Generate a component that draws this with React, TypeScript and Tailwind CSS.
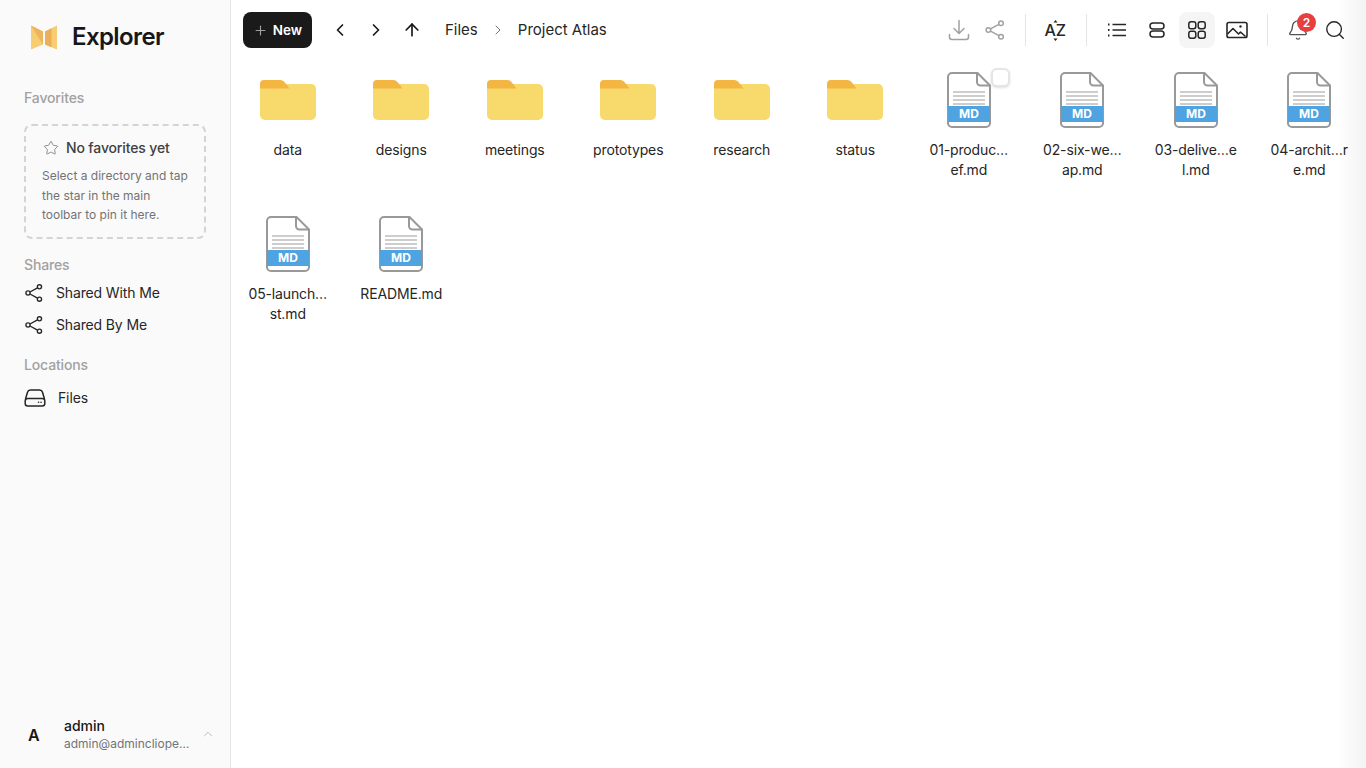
import React from 'react';
import { ArrowUp, Bell, ChevronLeft, ChevronRight, ChevronUp, Plus, Search, Star } from 'lucide-react';

type Entry = { kind: 'folder' | 'md'; lines: string[]; checkbox?: boolean };

const entries: Entry[] = [
  { kind: 'folder', lines: ['data'] },
  { kind: 'folder', lines: ['designs'] },
  { kind: 'folder', lines: ['meetings'] },
  { kind: 'folder', lines: ['prototypes'] },
  { kind: 'folder', lines: ['research'] },
  { kind: 'folder', lines: ['status'] },
  { kind: 'md', lines: ['01-produc…', 'ef.md'], checkbox: true },
  { kind: 'md', lines: ['02-six-we…', 'ap.md'] },
  { kind: 'md', lines: ['03-delive…e', 'l.md'] },
  { kind: 'md', lines: ['04-archit…r', 'e.md'] },
  { kind: 'md', lines: ['05-launch…', 'st.md'] },
  { kind: 'md', lines: ['README.md'] },
];

function ShareIcon({ className }: { className?: string }) {
  return (
    <svg viewBox="0 0 22 22" fill="none" stroke="currentColor" strokeWidth="1.5" className={className}>
      <circle cx="17" cy="4.2" r="2.3" />
      <circle cx="4.4" cy="11" r="2.3" />
      <circle cx="17" cy="17.8" r="2.3" />
      <path d="M6.5 9.900 14.900 5.300M6.500 12.100l8.400 4.600" />
    </svg>
  );
}

function DownloadIcon() {
  return (
    <svg viewBox="0 0 22 22" width="22" height="22" fill="none" stroke="currentColor" strokeWidth="1.5" strokeLinecap="round" strokeLinejoin="round" className="text-neutral-400">
      <path d="M11 1.500V14M6 9.500l5 5 5-5" />
      <path d="M1.500 15.500v2.500a2.500 2.500 0 0 0 2.500 2.500h14a2.500 2.500 0 0 0 2.500-2.500v-2.500" />
    </svg>
  );
}

function DriveIcon() {
  return (
    <svg viewBox="0 0 22 20" width="22" height="20" fill="none" stroke="currentColor" strokeWidth="1.5" className="text-neutral-800">
      <path d="M1.500 11 3.500 4.200A3 3 0 0 1 6.300 2h9.400a3 3 0 0 1 2.800 2.200L20.500 11" />
      <rect x="1.200" y="10.500" width="19.600" height="7.500" rx="2.500" />
      <path d="M14.500 14.300h.1M17 14.300h.1" strokeLinecap="round" />
    </svg>
  );
}

function Logo() {
  return (
    <svg viewBox="0 0 28 25" width="28" height="25" className="shrink-0">
      <path d="M1 .5 13 6.500V19.500L1 24.500Z" fill="#f6cd72" />
      <path d="M1 .5 13 6.500V19.500Z" fill="#eeb45c" />
      <path d="M27 .5 15 6.500V19.500L27 24.500Z" fill="#f6cd72" />
      <path d="M21.500 3.200 15 6.500V19.500L21.500 22.200Z" fill="#ebaf5a" />
    </svg>
  );
}

function SortIcon() {
  return (
    <svg viewBox="0 0 24 24" width="24" height="24" className="text-neutral-800">
      <text x="0.500" y="18" fontSize="16" fontWeight="500" fontFamily="Inter, sans-serif" fill="currentColor">A</text>
      <text x="11.800" y="18" fontSize="16" fontWeight="500" fontFamily="Inter, sans-serif" fill="currentColor">Z</text>
      <path d="M11.500 2 13.500 4.500H9.500ZM11.500 23 13.500 20.500H9.500Z" fill="currentColor" />
    </svg>
  );
}

function ListIcon() {
  return (
    <svg viewBox="0 0 20 20" width="20" height="20" fill="none" stroke="currentColor" strokeWidth="1.600" className="text-neutral-800">
      <path d="M5.500 4.500H19M5.500 10H19M5.500 15.500H19" />
      <path d="M1 4.500h1.500M1 10h1.500M1 15.500h1.500" strokeWidth="2" />
    </svg>
  );
}

function RowsIcon() {
  return (
    <svg viewBox="0 0 20 20" width="20" height="20" fill="none" stroke="currentColor" strokeWidth="1.5" className="text-neutral-800">
      <rect x="3" y="3" width="14" height="6" rx="3" />
      <rect x="3" y="11" width="14" height="6" rx="3" />
    </svg>
  );
}

function GridIcon() {
  return (
    <svg viewBox="0 0 20 20" width="20" height="20" fill="none" stroke="currentColor" strokeWidth="1.5" className="text-neutral-800">
      <rect x="1.800" y="1.800" width="7" height="7" rx="2.200" />
      <rect x="11.200" y="1.800" width="7" height="7" rx="2.200" />
      <rect x="1.800" y="11.200" width="7" height="7" rx="2.200" />
      <rect x="11.200" y="11.200" width="7" height="7" rx="2.200" />
    </svg>
  );
}

function ImageIcon() {
  return (
    <svg viewBox="0 0 22 18" width="22" height="18" fill="none" stroke="currentColor" strokeWidth="1.600" strokeLinejoin="round" className="text-neutral-800">
      <rect x="1" y="1.500" width="20" height="15" rx="1.800" />
      <path d="M1.500 13 7 7.500l5.500 5.500 2-2 5 4.500" />
      <circle cx="14.500" cy="5.500" r="1.200" fill="currentColor" stroke="none" />
    </svg>
  );
}

function FolderIcon() {
  return (
    <svg viewBox="0 0 56 40" width="56" height="40">
      <rect x="0" y="4" width="56" height="36" rx="5" fill="#f8d96b" />
      <path d="M0 9V4a4 4 0 0 1 4-4h16.500a5 5 0 0 1 3.500 1.500L26 4c1 1 2 2 3.500 4.500H0Z" fill="#f4b642" />
    </svg>
  );
}

function MdIcon() {
  return (
    <svg viewBox="0 0 44 56" width="44" height="56">
      <path d="M5 1h25.500L43 13.500V51a4 4 0 0 1-4 4H5a4 4 0 0 1-4-4V5a4 4 0 0 1 4-4Z" fill="#fff" stroke="#999" strokeWidth="2" />
      <path d="M30 1v9a3.500 3.500 0 0 0 3.500 3.500H43" fill="none" stroke="#999" strokeWidth="2" />
      <path d="M6 20h32M6 24h32M6 28h32M6 32h32" stroke="#bdbdbd" strokeWidth="1.300" />
      <rect x="1" y="34" width="42" height="16" fill="#4ea3e0" />
      <text x="22" y="46" textAnchor="middle" fontSize="12" fontWeight="700" fontFamily="Inter, sans-serif" fill="#fff">MD</text>
    </svg>
  );
}

function Divider() {
  return <div className="mx-3 h-8 w-px bg-neutral-200" />;
}

function ToolButton({ children, active }: { children: React.ReactNode; active?: boolean }) {
  return (
    <button className={`flex h-9 w-9 items-center justify-center rounded-lg ${active ? 'bg-neutral-100' : ''}`}>
      {children}
    </button>
  );
}

function Sidebar() {
  return (
    <aside className="flex h-screen w-[231px] shrink-0 flex-col border-r border-neutral-200 bg-[#fafafa] px-6">
      <div className="flex h-[74px] items-center gap-[14px] pl-[6px]">
        <Logo />
        <span className="text-2xl font-semibold tracking-tight text-neutral-900">Explorer</span>
      </div>

      <h3 className="mt-[14px] text-sm leading-5 font-medium tracking-[-0.01em] text-neutral-400">Favorites</h3>
      <div className="mt-4 h-[115px] w-[182px] rounded-lg border-2 border-dashed border-neutral-300 pt-3 pl-4">
        <div className="flex items-center gap-[7px]">
          <Star size={16} strokeWidth={1.2} className="ml-[1px] text-neutral-500" />
          <span className="text-sm leading-5 font-medium tracking-[-0.01em] text-neutral-700">No favorites yet</span>
        </div>
        <p className="mt-2 text-xs leading-[19.5px] text-neutral-500">
          Select a directory and tap
          <br />
          the star in the main
          <br />
          toolbar to pin it here.
        </p>
      </div>

      <h3 className="mt-4 text-sm leading-5 font-medium tracking-[-0.01em] text-neutral-400">Shares</h3>
      <div className="mt-[2px] flex flex-col">
        {['Shared With Me', 'Shared By Me'].map((label) => (
          <div key={label} className="flex h-8 items-center gap-[12px] text-neutral-800">
            <ShareIcon className="h-5 w-5" />
            <span className="text-sm tracking-[-0.01em] text-neutral-800">{label}</span>
          </div>
        ))}
      </div>

      <h3 className="mt-[14px] text-sm leading-5 font-medium tracking-[-0.01em] text-neutral-400">Locations</h3>
      <div className="mt-[5px] flex h-9 items-center gap-[12px]">
        <DriveIcon />
        <span className="text-sm tracking-[-0.01em] text-neutral-800">Files</span>
      </div>

      <div className="mt-auto mb-[15px] flex h-9 items-center">
        <span className="w-10 pl-[4px] text-base font-semibold text-neutral-900">A</span>
        <div className="min-w-0 flex-1">
          <div className="text-sm leading-[18px] font-medium text-neutral-900">admin</div>
          <div className="text-xs leading-[18px] text-neutral-500">admin@admincliope…</div>
        </div>
        <ChevronUp size={14} strokeWidth={1.2} className="-mr-[9px] -translate-y-[1px] text-neutral-400" />
      </div>
    </aside>
  );
}

function Toolbar() {
  return (
    <header className="flex h-[60px] items-center pr-[13px] pl-3">
      <button className="flex h-9 w-[69px] items-center justify-center gap-[5px] rounded-lg bg-[#1a1a1a] text-[13.5px] font-semibold text-white">
        <Plus size={15} strokeWidth={1.8} className="text-neutral-400" />
        New
      </button>
      <div className="ml-[10px] flex items-center">
        <ToolButton><ChevronLeft size={20} strokeWidth={2} className="text-neutral-900" /></ToolButton>
        <ToolButton><ChevronRight size={20} strokeWidth={2} className="text-neutral-900" /></ToolButton>
        <ToolButton><ArrowUp size={20} strokeWidth={2} className="text-neutral-900" /></ToolButton>
      </div>
      <nav className="ml-[15px] flex items-center text-[15px] text-neutral-800">
        <span>Files</span>
        <ChevronRight size={16} strokeWidth={1.5} className="mx-3 text-neutral-500" />
        <span>Project Atlas</span>
      </nav>

      <div className="ml-auto flex items-center">
        <ToolButton><DownloadIcon /></ToolButton>
        <ToolButton><ShareIcon className="h-[22px] w-[22px] text-neutral-400" /></ToolButton>
        <Divider />
        <ToolButton><SortIcon /></ToolButton>
        <Divider />
        <div className="flex items-center gap-1">
          <ToolButton><ListIcon /></ToolButton>
          <ToolButton><RowsIcon /></ToolButton>
          <ToolButton active><GridIcon /></ToolButton>
          <ToolButton><ImageIcon /></ToolButton>
        </div>
        <Divider />
        <div className="relative">
          <ToolButton><Bell size={22} strokeWidth={1.5} className="text-neutral-600" /></ToolButton>
          <span className="absolute top-[1px] right-0 flex h-[19px] w-[19px] items-center justify-center rounded-full bg-[#e5403f] text-xs font-semibold text-white">
            2
          </span>
        </div>
        <div className="ml-px">
          <ToolButton><Search size={22} strokeWidth={1.5} className="text-neutral-800" /></ToolButton>
        </div>
      </div>
    </header>
  );
}

function FileItem({ entry }: { entry: Entry }) {
  return (
    <div className="relative flex h-[144px] flex-col items-center pt-3">
      <div className="flex h-14 items-center justify-center">
        {entry.kind === 'folder' ? <FolderIcon /> : <MdIcon />}
      </div>
      <div className="mt-3 text-center text-sm leading-5 tracking-[-0.01em] text-neutral-800">
        {entry.lines.map((line) => (
          <div key={line}>{line}</div>
        ))}
      </div>
      {entry.checkbox && (
        <span className="absolute top-2 right-4 h-[19px] w-[19px] rounded-md border-2 border-neutral-200 bg-white shadow-sm" />
      )}
    </div>
  );
}

export default function App() {
  return (
    <div className="relative flex h-screen overflow-hidden bg-white font-['Inter',sans-serif]">
      <Sidebar />
      <main className="min-w-0 flex-1">
        <Toolbar />
        <div className="grid grid-cols-[repeat(10,113.5px)]">
          {entries.map((entry) => (
            <FileItem key={entry.lines.join('')} entry={entry} />
          ))}
        </div>
      </main>
      <div className="pointer-events-none absolute inset-y-0 right-0 w-7 bg-gradient-to-r from-transparent to-black/5" />
    </div>
  );
}
